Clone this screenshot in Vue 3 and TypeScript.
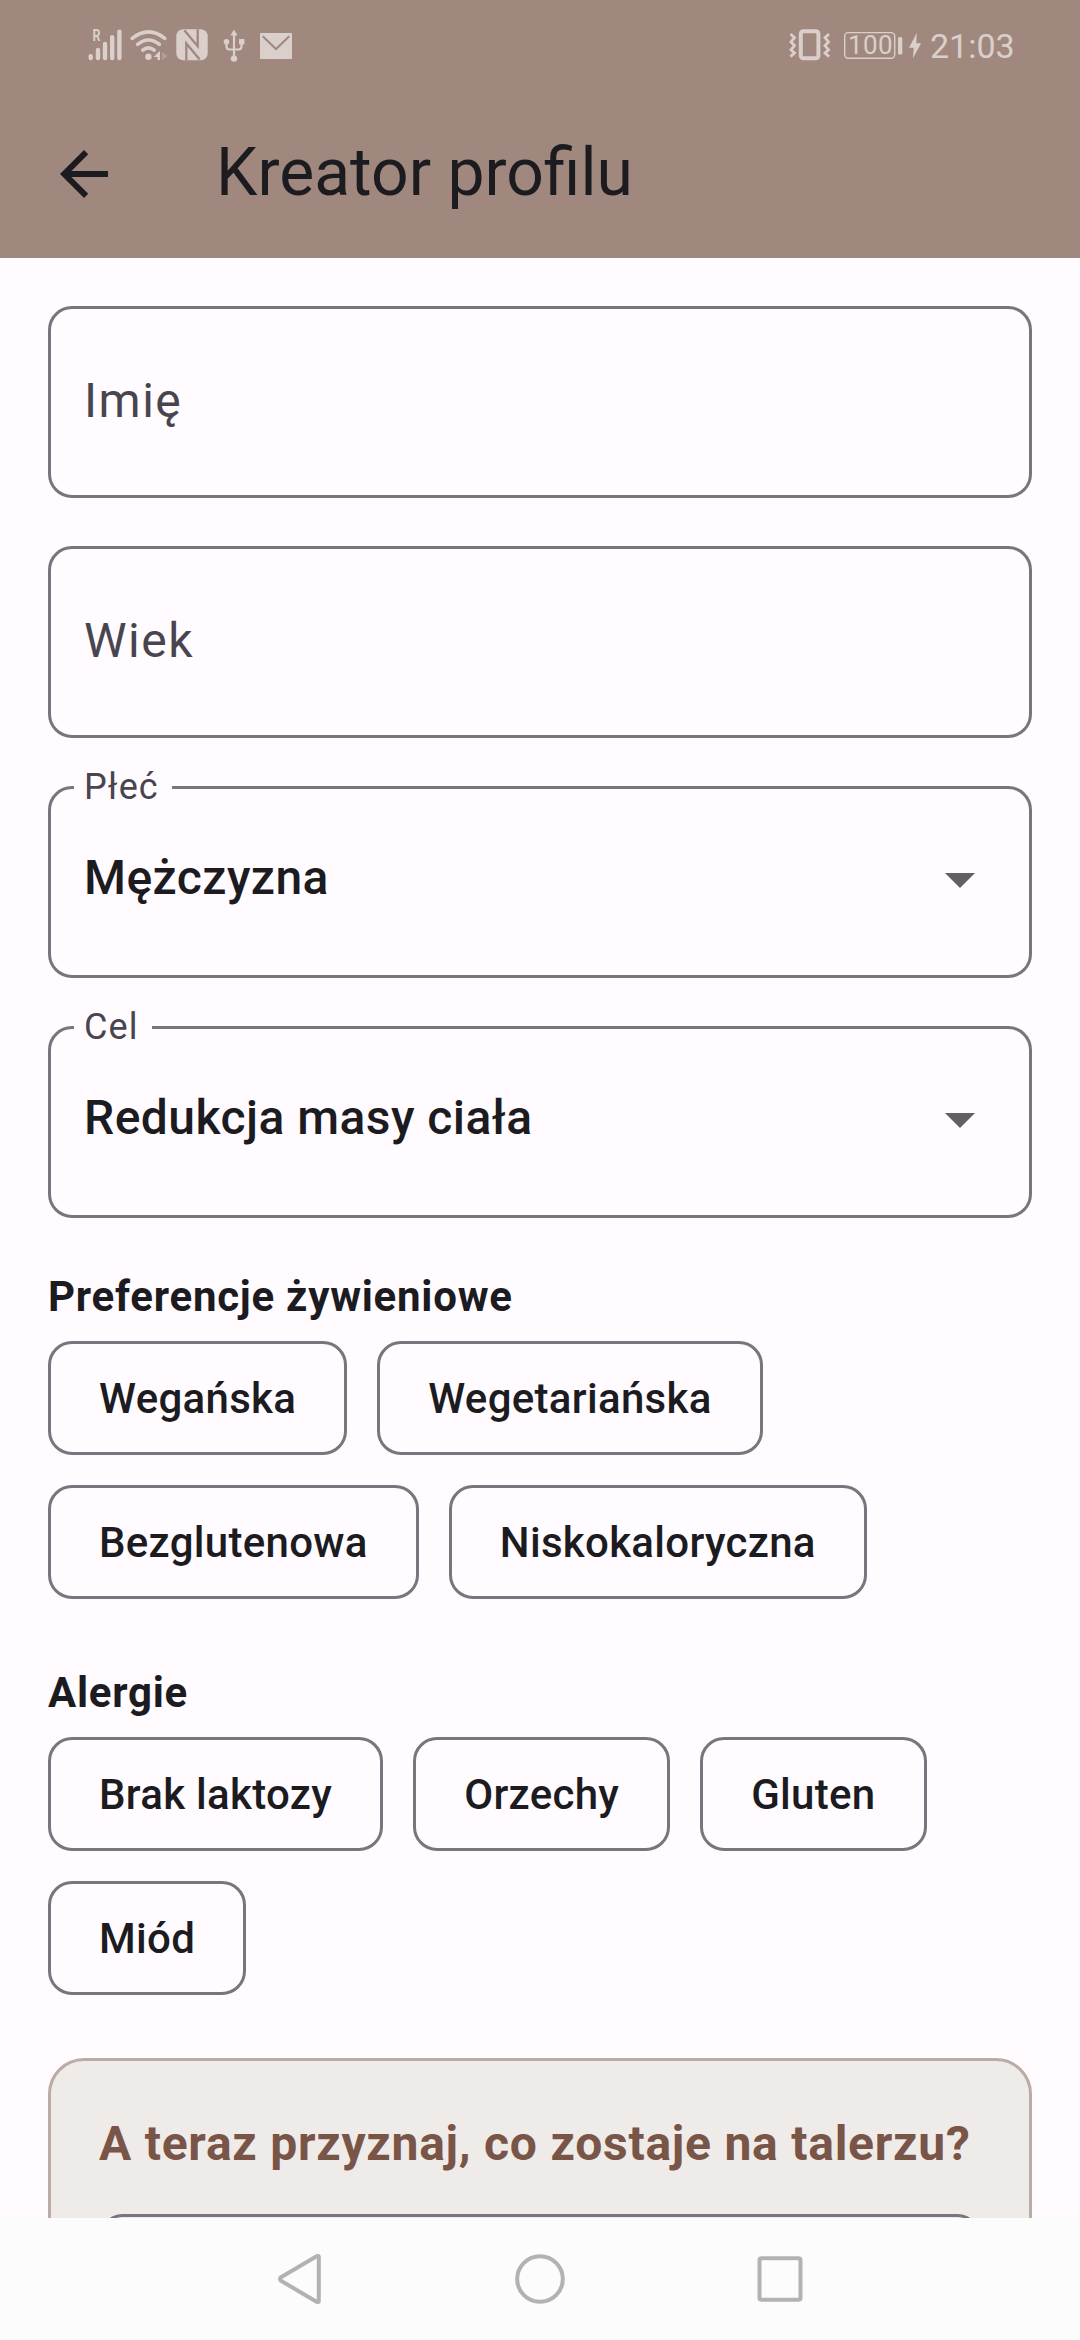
<script setup lang="ts">
interface Field {
  label: string
  value?: string
}

interface ChipGroup {
  title: string
  options: string[]
}

const fields: Field[] = [
  { label: 'Imię' },
  { label: 'Wiek' },
  { label: 'Płeć', value: 'Mężczyzna' },
  { label: 'Cel', value: 'Redukcja masy ciała' },
]

const groups: ChipGroup[] = [
  {
    title: 'Preferencje żywieniowe',
    options: ['Wegańska', 'Wegetariańska', 'Bezglutenowa', 'Niskokaloryczna'],
  },
  {
    title: 'Alergie',
    options: ['Brak laktozy', 'Orzechy', 'Gluten', 'Miód'],
  },
]
</script>

<template>
  <div class="screen">
    <header class="top">
      <div class="status">
        <div class="status-left">
          <svg class="signal" width="40" height="90" viewBox="86 0 40 90">
            <text class="roaming" x="92.6" y="40.6" textLength="8" lengthAdjust="spacingAndGlyphs">R</text>
            <path class="line" stroke-width="4.4" stroke-linecap="round" d="M90.7 56.3v1.8M98 50v8.1M105 43.9v14.2M112.2 37.2v20.9M119.4 31.6v26.5" />
          </svg>
          <svg class="wifi" width="42" height="90" viewBox="129 0 42 90">
            <path class="line" stroke-width="3.6" stroke-linecap="round" d="M132.2 38.3q16.3-13 32.6 0M137.6 44.3q10.9-8.6 21.8 0M142.8 50.2q5.7-4.6 11.4 0" />
            <circle class="solid" cx="148.4" cy="56.7" r="3.2" />
            <path class="solid" d="M153.6 57l5.6-5.4h.8V60h-2.6v-3z" />
            <path class="solid dim" d="M162 52l5.6 4-5.6 4.4z" />
          </svg>
          <svg class="nfc" width="32" height="90" viewBox="176 0 32 90">
            <rect class="solid" x="176.3" y="29.3" width="31.4" height="31" rx="7" />
            <path class="cut" stroke-width="2.3" d="M184.3 30.2l13.4 16v-16.9M186.3 60.3v-16.9l13.4 16" />
          </svg>
          <svg class="usb" width="24" height="90" viewBox="222 0 24 90">
            <path class="line" stroke-width="2.2" d="M234 34v23M226.5 42v4.5q0 3 3 3h9q3 0 3-3v-4.5" />
            <path class="solid" d="M234 29.6l3.6 6h-7.2z" />
            <circle class="solid" cx="234" cy="58.6" r="3.2" />
            <circle class="solid" cx="226.5" cy="41.7" r="2.8" />
            <rect class="solid" x="239" y="39" width="5.4" height="5.4" />
          </svg>
          <svg class="mail" width="32" height="90" viewBox="260 0 32 90">
            <rect class="solid" x="260" y="33" width="32" height="26" rx="1" />
            <path class="cut" stroke-width="2" d="M262.7 36.2l13.3 12.8 13.3-12.8" />
          </svg>
        </div>
        <div class="status-right">
          <svg class="vibrate" width="42" height="90" viewBox="789 0 42 90">
            <rect class="line" stroke-width="4" x="800.8" y="31.3" width="17.6" height="27" rx="2.5" />
            <path class="line" stroke-width="2.8" d="M790.5 34l4 3.6-3.5 4.4 3.5 3.6-3.5 4.2 3.5 3.2-4 3.6M829 34l-4 3.6 3.5 4.4-3.5 3.6 3.5 4.2-3.5 3.2 4 3.6" />
          </svg>
          <svg class="battery" width="60" height="90" viewBox="844 0 60 90">
            <rect class="line" stroke-width="1.4" x="844.7" y="32.6" width="50" height="25.6" rx="3.5" />
            <text class="level" x="848" y="54.4" textLength="44.5">100</text>
            <rect class="solid" x="898" y="37" width="4.3" height="17.4" rx="1.5" />
          </svg>
          <svg class="bolt" width="14" height="90" viewBox="908 0 14 90">
            <path class="solid" d="M916.7 33l-7.7 14.7h4.7l-.7 10.6 8-15h-4.7z" />
          </svg>
          <span class="clock">21:03</span>
        </div>
      </div>
      <div class="appbar">
        <svg class="back" width="48" height="48" viewBox="4 4 16 16">
          <path d="M20 11H7.83l5.59-5.59L12 4l-8 8 8 8 1.41-1.41L7.83 13H20v-2z" />
        </svg>
        <h1>Kreator profilu</h1>
      </div>
    </header>

    <main class="content">
      <div class="fields">
        <div v-for="field in fields" :key="field.label" class="field" :class="{ filled: field.value }">
          <span class="label">{{ field.label }}</span>
          <template v-if="field.value">
            <span class="value">{{ field.value }}</span>
            <svg class="caret" width="30" height="15" viewBox="0 0 30 15">
              <path d="M0 0h30L15 15z" />
            </svg>
          </template>
        </div>
      </div>

      <section v-for="group in groups" :key="group.title" class="group">
        <h2>{{ group.title }}</h2>
        <div class="chips">
          <span v-for="option in group.options" :key="option" class="chip">{{ option }}</span>
        </div>
      </section>

      <section class="card">
        <h3>A teraz przyznaj, co zostaje na talerzu?</h3>
        <div class="card-input"></div>
      </section>
    </main>

    <nav class="navbar">
      <svg width="50" height="54" viewBox="0 0 50 54">
        <path d="M43.8 4.6v44.8q-.3 1-1.8.5L6 28.8q-1.8-1.8 0-3.6L42 4.1q1.5-.5 1.8.5z" />
      </svg>
      <svg width="54" height="54" viewBox="0 0 54 54">
        <circle cx="27" cy="27" r="22.8" />
      </svg>
      <svg width="50" height="54" viewBox="0 0 50 54">
        <rect x="4.5" y="6.3" width="41" height="41.4" rx="2" />
      </svg>
    </nav>
  </div>
</template>

<style>
body {
  margin: 0;
  background: #fffbff;
}
</style>

<style scoped>
.screen {
  display: flex;
  flex-direction: column;
  width: 1080px;
  height: 2340px;
  overflow: hidden;
  background: #fffbff;
  color: #1c1b1f;
  font-family: Roboto, sans-serif;
}

svg {
  display: block;
  flex: none;
}

.top {
  flex: none;
  height: 258px;
  background: #a1887f;
}

.status {
  display: flex;
  justify-content: space-between;
  height: 90px;
  padding: 0 66px 0 86px;
  color: #dacfcb;
}

.status-left,
.status-right {
  display: flex;
}

.wifi { margin-left: 3px; }
.nfc { margin-left: 5px; }
.usb { margin-left: 14px; }
.mail { margin-left: 14px; }
.battery { margin-left: 13px; }
.bolt { margin-left: 4px; }

.line {
  fill: none;
  stroke: currentColor;
}

.solid {
  fill: currentColor;
}

.dim {
  opacity: 0.3;
}

.cut {
  fill: none;
  stroke: #a1887f;
}

.roaming {
  fill: currentColor;
  font-size: 16px;
  font-weight: 700;
}

.level {
  fill: currentColor;
  font-size: 26px;
}

.clock {
  width: 84px;
  margin-left: 8px;
  font-size: 34px;
  line-height: 92px;
  white-space: nowrap;
}

.appbar {
  display: flex;
  align-items: center;
  height: 168px;
  padding-left: 60px;
}

.back path {
  fill: #1c1b1f;
}

h1,
h2,
h3 {
  margin: 0;
}

h1 {
  margin: -2px 0 0 108px;
  font-size: 66px;
  font-weight: 400;
  line-height: 84px;
}

.content {
  flex: none;
  box-sizing: border-box;
  height: 1960px;
  padding: 48px 48px 0;
  overflow: hidden;
}

.fields {
  display: flex;
  flex-direction: column;
  gap: 48px;
}

.field {
  position: relative;
  display: flex;
  align-items: flex-start;
  justify-content: space-between;
  box-sizing: border-box;
  height: 192px;
  padding: 64px 54px 0 33px;
  border: 3px solid #79747e;
  border-radius: 24px;
  font-size: 48px;
  line-height: 56px;
}

.label {
  color: #49454f;
  letter-spacing: 1.5px;
}

.filled {
  padding-top: 61px;
}

.filled .label {
  position: absolute;
  top: -23px;
  left: 23px;
  padding: 0 13px 0 10px;
  background: #fffbff;
  font-size: 36px;
  line-height: 42px;
  letter-spacing: 1.1px;
}

.value {
  font-weight: 500;
  letter-spacing: 0.45px;
}

.caret {
  margin-top: 23px;
}

.caret path {
  fill: #616161;
}

.group h2 {
  padding-top: 48px;
  font-size: 42px;
  font-weight: 700;
  line-height: 62px;
  letter-spacing: 0.75px;
}

.chips {
  display: flex;
  flex-wrap: wrap;
  gap: 30px;
  padding: 13px 0 15px;
}

.chip {
  box-sizing: border-box;
  height: 114px;
  padding: 0 48px;
  border: 3px solid #79747e;
  border-radius: 24px;
  font-size: 42px;
  font-weight: 500;
  line-height: 109px;
  letter-spacing: 0.3px;
}

.card {
  box-sizing: border-box;
  height: 600px;
  margin-top: 48px;
  padding: 48px;
  border: 3px solid #bcaaa4;
  border-radius: 36px;
  background: #efebe9;
}

.card h3 {
  color: #795548;
  font-size: 48px;
  font-weight: 700;
  line-height: 69px;
  letter-spacing: 0.75px;
  white-space: nowrap;
}

.card-input {
  height: 186px;
  margin-top: 36px;
  border: 3px solid #79747e;
  border-radius: 24px;
}

.navbar {
  display: flex;
  flex: none;
  align-items: center;
  justify-content: center;
  gap: 188px;
  height: 122px;
  background: #fcfcfc;
}

.navbar svg {
  fill: none;
  stroke: #b2b2b2;
  stroke-width: 4px;
  stroke-linejoin: round;
}
</style>
